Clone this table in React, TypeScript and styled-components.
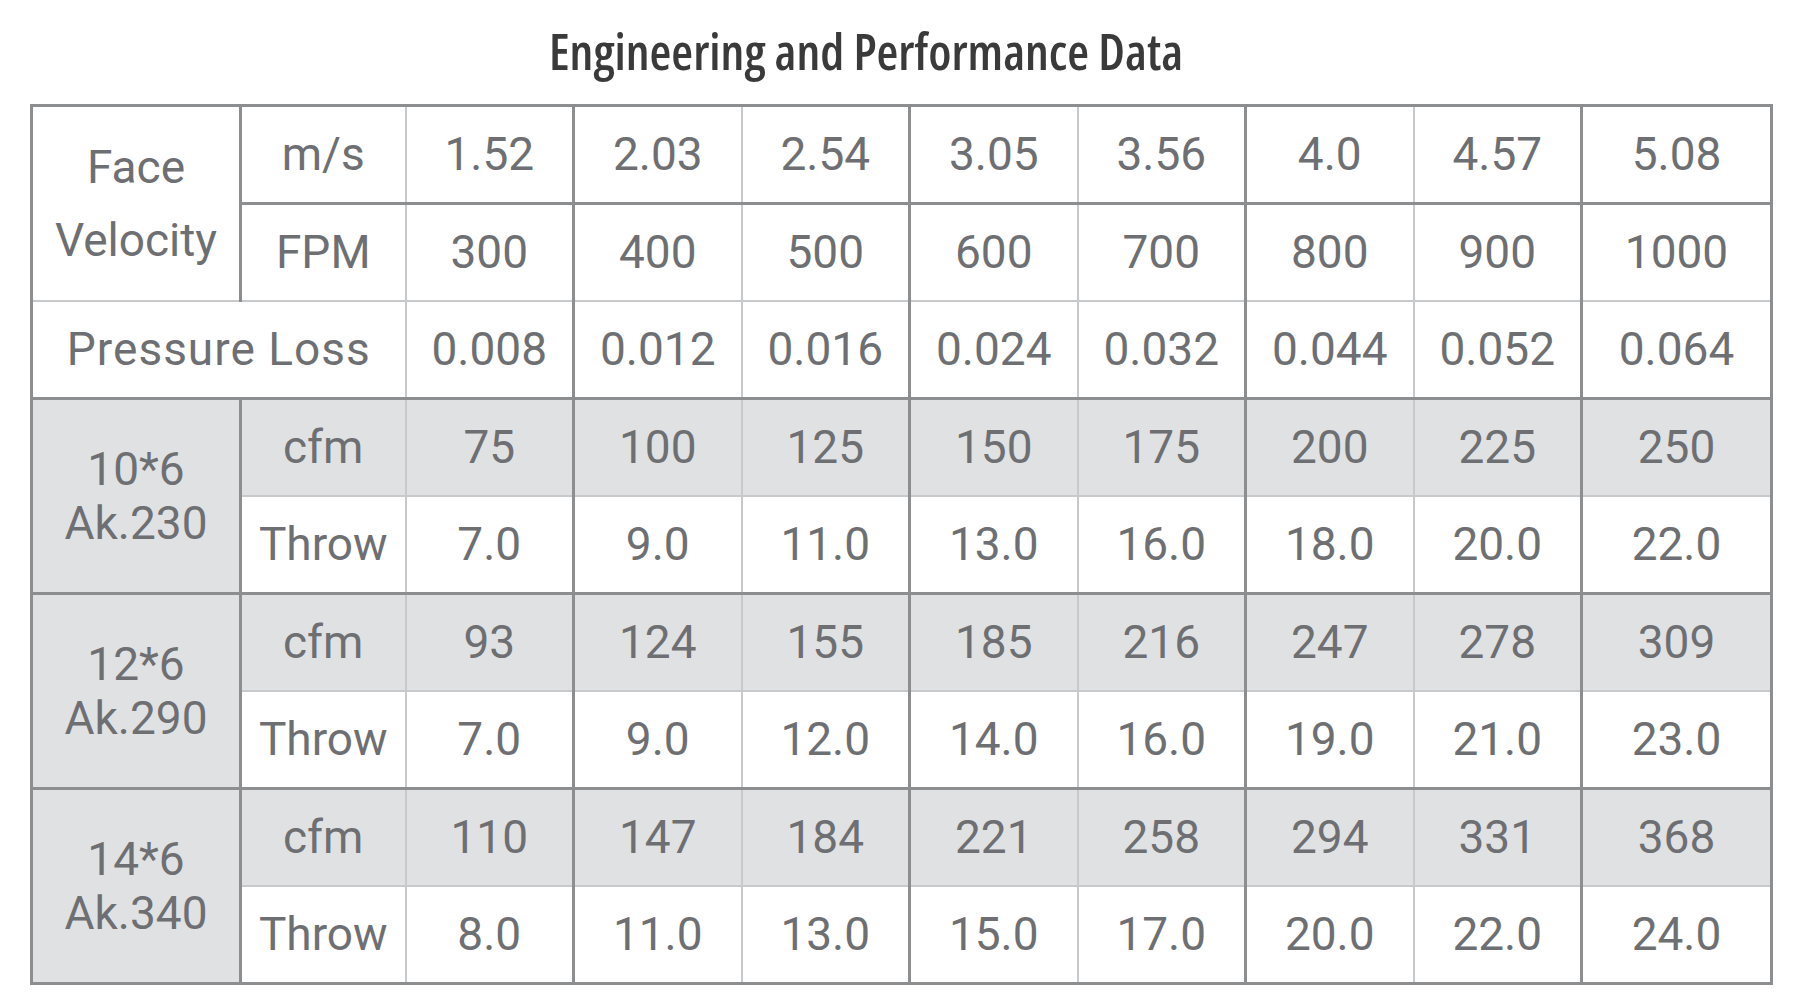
import React from 'react';
import styled, { createGlobalStyle } from 'styled-components';

const GlobalStyle = createGlobalStyle`
  body {
    margin: 0;
    background: #ffffff;
  }
`;

const DARK = '3px solid #8d8e90';
const LIGHT = '2px solid #c8c9cb';

type Line = 'dark' | 'light' | 'none';

const Page = styled.div`
  width: 1793px;
  box-sizing: border-box;
  padding: 0 21px 0 30px;
`;

const Title = styled.h2`
  margin: 0;
  height: 104px;
  padding: 1px 70px 0 0;
  box-sizing: border-box;
  line-height: 100px;
  text-align: center;
  font-family: 'Open Sans', 'Noto Sans', sans-serif;
  font-stretch: 81%;
  font-size: 50px;
  font-weight: 600;
  color: #3a3a3b;
`;

const Grid = styled.table`
  border-collapse: collapse;
  table-layout: fixed;
  width: 1742px;
  border: 3px solid #8d8e90;
  font-family: Roboto, 'Liberation Sans', sans-serif;
  font-size: 46px;
  color: #6e6f72;
`;

const Cell = styled.td<{ $shade?: boolean; $left: Line; $top: Line; $lh?: string }>`
  height: 95px;
  padding: 0;
  text-align: center;
  vertical-align: middle;
  white-space: nowrap;
  line-height: ${(p) => p.$lh ?? '1.2'};
  background: ${(p) => (p.$shade ? '#e0e1e3' : '#ffffff')};
  border-left: ${(p) => (p.$left === 'dark' ? DARK : p.$left === 'light' ? LIGHT : 'none')};
  border-top: ${(p) => (p.$top === 'dark' ? DARK : p.$top === 'light' ? LIGHT : 'none')};
`;

const Wide = styled.span`
  letter-spacing: 1px;
`;

const colLine = (c: number): Line => (c === 0 ? 'none' : c % 2 === 1 ? 'dark' : 'light');
const rowLine = (r: number): Line => (r === 0 ? 'none' : r % 2 === 1 ? 'dark' : 'light');

const widths = [209, 165, 168, 168, 168, 168, 168, 168, 168, 190];

const ms = ['1.52', '2.03', '2.54', '3.05', '3.56', '4.0', '4.57', '5.08'];
const fpm = ['300', '400', '500', '600', '700', '800', '900', '1000'];
const loss = ['0.008', '0.012', '0.016', '0.024', '0.032', '0.044', '0.052', '0.064'];

const groups = [
  {
    size: '10*6',
    ak: 'Ak.230',
    cfm: ['75', '100', '125', '150', '175', '200', '225', '250'],
    thr: ['7.0', '9.0', '11.0', '13.0', '16.0', '18.0', '20.0', '22.0'],
  },
  {
    size: '12*6',
    ak: 'Ak.290',
    cfm: ['93', '124', '155', '185', '216', '247', '278', '309'],
    thr: ['7.0', '9.0', '12.0', '14.0', '16.0', '19.0', '21.0', '23.0'],
  },
  {
    size: '14*6',
    ak: 'Ak.340',
    cfm: ['110', '147', '184', '221', '258', '294', '331', '368'],
    thr: ['8.0', '11.0', '13.0', '15.0', '17.0', '20.0', '22.0', '24.0'],
  },
];

const DataCells = ({ values, row, shade }: { values: string[]; row: number; shade?: boolean }) => (
  <>
    {values.map((v, i) => (
      <Cell key={i} $left={colLine(i + 2)} $top={rowLine(row)} $shade={shade}>
        {v}
      </Cell>
    ))}
  </>
);

const App = () => {
  return (
    <Page>
      <GlobalStyle />
      <Title>Engineering and Performance Data</Title>
      <Grid>
        <colgroup>
          {widths.map((w, i) => (
            <col key={i} style={{ width: w }} />
          ))}
        </colgroup>
        <tbody>
          <tr>
            <Cell rowSpan={2} $left="none" $top="none" $lh="73px">
              Face
              <br />
              Velocity
            </Cell>
            <Cell $left={colLine(1)} $top="none">
              m/s
            </Cell>
            <DataCells values={ms} row={0} />
          </tr>
          <tr>
            <Cell $left={colLine(1)} $top={rowLine(1)}>
              FPM
            </Cell>
            <DataCells values={fpm} row={1} />
          </tr>
          <tr>
            <Cell colSpan={2} $left="none" $top={rowLine(2)}>
              <Wide>Pressure Loss</Wide>
            </Cell>
            <DataCells values={loss} row={2} />
          </tr>
          {groups.map((g, gi) => {
            const r = 3 + gi * 2;
            return (
              <React.Fragment key={g.size}>
                <tr>
                  <Cell rowSpan={2} $shade $left="none" $top={rowLine(r)} $lh="54px">
                    {g.size}
                    <br />
                    {g.ak}
                  </Cell>
                  <Cell $shade $left={colLine(1)} $top={rowLine(r)}>
                    cfm
                  </Cell>
                  <DataCells values={g.cfm} row={r} shade />
                </tr>
                <tr>
                  <Cell $left={colLine(1)} $top={rowLine(r + 1)}>
                    Throw
                  </Cell>
                  <DataCells values={g.thr} row={r + 1} />
                </tr>
              </React.Fragment>
            );
          })}
        </tbody>
      </Grid>
    </Page>
  );
};

export default App;
